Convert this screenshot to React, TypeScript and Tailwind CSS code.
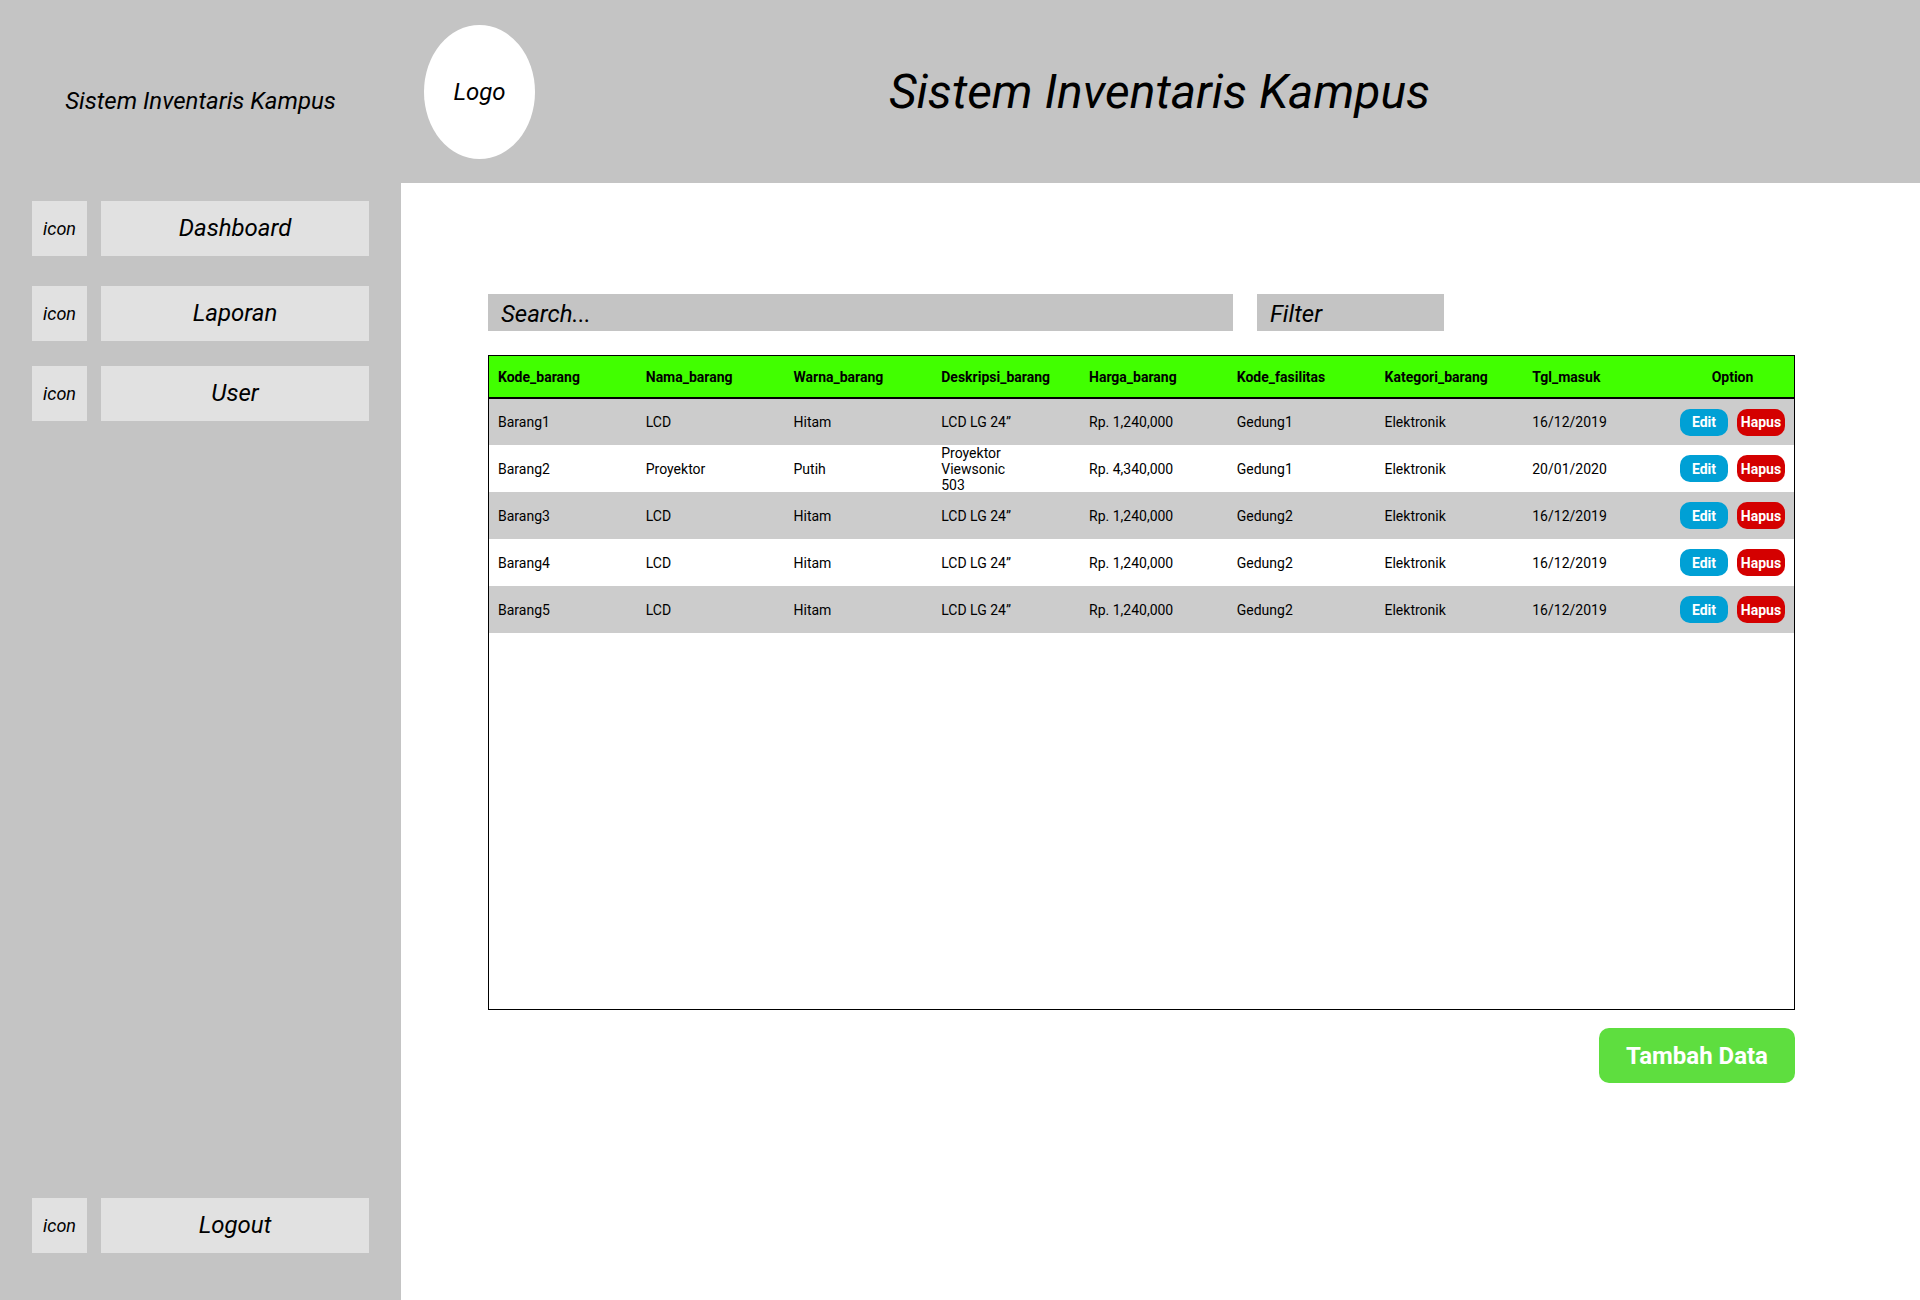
type Item = {
  kode: string;
  nama: string;
  warna: string;
  deskripsi: string;
  harga: string;
  fasilitas: string;
  kategori: string;
  tanggal: string;
};

const columns = [
  'Kode_barang',
  'Nama_barang',
  'Warna_barang',
  'Deskripsi_barang',
  'Harga_barang',
  'Kode_fasilitas',
  'Kategori_barang',
  'Tgl_masuk',
];

const items: Item[] = [
  { kode: 'Barang1', nama: 'LCD', warna: 'Hitam', deskripsi: 'LCD LG 24”', harga: 'Rp. 1,240,000', fasilitas: 'Gedung1', kategori: 'Elektronik', tanggal: '16/12/2019' },
  { kode: 'Barang2', nama: 'Proyektor', warna: 'Putih', deskripsi: 'Proyektor Viewsonic 503', harga: 'Rp. 4,340,000', fasilitas: 'Gedung1', kategori: 'Elektronik', tanggal: '20/01/2020' },
  { kode: 'Barang3', nama: 'LCD', warna: 'Hitam', deskripsi: 'LCD LG 24”', harga: 'Rp. 1,240,000', fasilitas: 'Gedung2', kategori: 'Elektronik', tanggal: '16/12/2019' },
  { kode: 'Barang4', nama: 'LCD', warna: 'Hitam', deskripsi: 'LCD LG 24”', harga: 'Rp. 1,240,000', fasilitas: 'Gedung2', kategori: 'Elektronik', tanggal: '16/12/2019' },
  { kode: 'Barang5', nama: 'LCD', warna: 'Hitam', deskripsi: 'LCD LG 24”', harga: 'Rp. 1,240,000', fasilitas: 'Gedung2', kategori: 'Elektronik', tanggal: '16/12/2019' },
];

function NavItem({ label }: { label: string }) {
  return (
    <a href="#" className="flex h-[55px] gap-[14px]">
      <span className="flex w-[55px] items-center justify-center bg-[#e1e1e1] text-lg">icon</span>
      <span className="flex flex-1 items-center justify-center bg-[#e1e1e1] pb-0.5 text-2xl">{label}</span>
    </a>
  );
}

function Sidebar() {
  return (
    <aside className="flex w-[401px] shrink-0 flex-col bg-[#c4c4c4] px-8 pb-[47px] italic">
      <p className="flex h-[201px] items-center justify-center text-2xl">Sistem Inventaris Kampus</p>
      <nav className="flex flex-1 flex-col">
        <NavItem label="Dashboard" />
        <div className="mt-[30px]">
          <NavItem label="Laporan" />
        </div>
        <div className="mt-[25px]">
          <NavItem label="User" />
        </div>
        <div className="mt-auto">
          <NavItem label="Logout" />
        </div>
      </nav>
    </aside>
  );
}

function Header() {
  return (
    <header className="flex h-[183px] items-center bg-[#c4c4c4] px-[23px] italic">
      <div className="flex h-[134px] w-[111px] items-center justify-center rounded-[50%] bg-white text-2xl">Logo</div>
      <h1 className="flex-1 pr-[113px] text-center text-5xl">Sistem Inventaris Kampus</h1>
    </header>
  );
}

function ItemTable() {
  return (
    <div className="mt-6 min-h-[655px] border border-black">
      <table className="w-full table-fixed border-separate border-spacing-0 text-left text-sm/4">
        <thead>
          <tr className="h-[43px] bg-[#41ff00]">
            {columns.map((name) => (
              <th key={name} scope="col" className="border-b-2 border-black py-0 pl-[9px] font-bold">
                {name}
              </th>
            ))}
            <th scope="col" className="w-[123px] border-b-2 border-black p-0 text-center font-bold">
              Option
            </th>
          </tr>
        </thead>
        <tbody>
          {items.map((item) => (
            <tr key={item.kode} className="h-[47px] first:h-[46px] odd:bg-[#cccccc]">
              {Object.entries(item).map(([field, value]) => (
                <td key={field} className="py-0 pl-[9px] pr-12">
                  <div className="flex h-11 items-center">{value}</div>
                </td>
              ))}
              <td className="p-0">
                <div className="flex justify-center gap-[9px] font-bold text-white">
                  <button type="button" className="h-[27px] w-12 rounded-[10px] bg-[#00a0d5]">Edit</button>
                  <button type="button" className="h-[27px] w-12 rounded-[10px] bg-[#d40000]">Hapus</button>
                </div>
              </td>
            </tr>
          ))}
        </tbody>
      </table>
    </div>
  );
}

export default function App() {
  return (
    <div className="flex min-h-screen bg-white font-[Roboto,sans-serif] text-black">
      <Sidebar />
      <div className="flex min-w-0 flex-1 flex-col">
        <Header />
        <main className="flex flex-col pl-[87px] pr-[125px] pt-[111px]">
          <div className="flex gap-6">
            <input
              type="search"
              aria-label="Search"
              placeholder="Search..."
              className="h-[37px] w-[57%] bg-[#c4c4c4] px-[13px] pt-0.5 text-2xl italic placeholder:text-black"
            />
            <select
              aria-label="Filter"
              className="h-[37px] w-[187px] appearance-none bg-[#c4c4c4] px-[13px] pt-0.5 text-2xl italic"
            >
              <option>Filter</option>
            </select>
          </div>
          <ItemTable />
          <button
            type="button"
            className="mt-[18px] h-[55px] w-[196px] self-end rounded-[10px] bg-[#5ede3f] text-2xl font-bold text-white"
          >
            Tambah Data
          </button>
        </main>
      </div>
    </div>
  );
}
